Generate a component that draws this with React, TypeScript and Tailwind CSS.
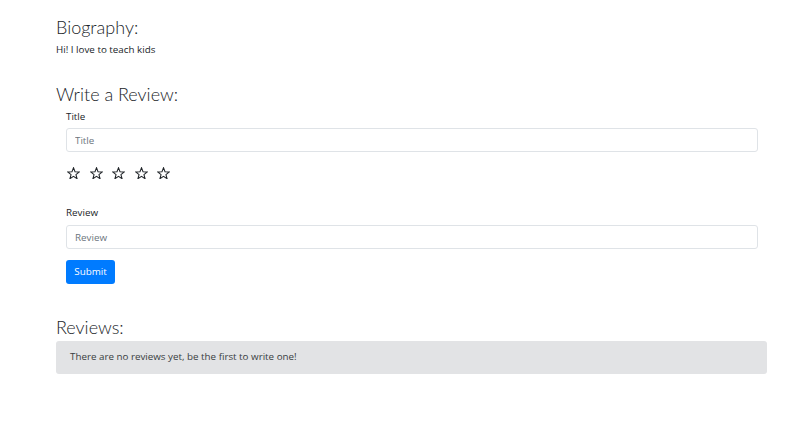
const BODY = { fontFamily: '"Open Sans", "Noto Sans", sans-serif' };
const HEAD = { fontFamily: 'Lato, "Open Sans", sans-serif' };

function Star() {
  return (
    <svg width="13" height="12" viewBox="0 0 24 23" fill="none" stroke="#212529" strokeWidth="2" strokeLinejoin="miter">
      <path d="M12 1.5l2.9 7.6 8.1.4-6.3 5.1 2.2 7.9L12 18l-6.9 4.5 2.2-7.9L1 9.5l8.1-.4z" />
    </svg>
  );
}

export default function App() {
  return (
    <div className="min-h-[435px] bg-white text-[#212529]" style={BODY}>
      <div className="w-[711px] ml-[56px] pt-[15px]">
        <h3 className="text-[18px] leading-[24px] font-light" style={HEAD}>Biography:</h3>
        <p className="mt-[3px] text-[9.8px] leading-[15px]">Hi! I love to teach kids</p>

        <h3 className="mt-[25px] text-[18px] leading-[24px] font-light" style={HEAD}>Write a Review:</h3>
        <form className="px-[10px]" onSubmit={(e) => e.preventDefault()}>
          <label className="block mt-[3px] text-[9.8px] leading-[15px]">Title</label>
          <input
            placeholder="Title"
            className="mt-[4px] block w-[692px] h-[24px] px-[8px] text-[9.8px] border border-[#dfe3e7] rounded-[3px] placeholder:text-[#6c757d] outline-none"
          />
          <div className="mt-[15px] flex gap-[9.5px] pl-[1px]">
            <Star />
            <Star />
            <Star />
            <Star />
            <Star />
          </div>
          <label className="block mt-[26px] text-[9.8px] leading-[15px]">Review</label>
          <input
            placeholder="Review"
            className="mt-[5px] block w-[692px] h-[24px] px-[8px] text-[9.8px] border border-[#dfe3e7] rounded-[3px] placeholder:text-[#6c757d] outline-none"
          />
          <button className="mt-[11px] h-[24px] w-[49px] rounded-[3px] bg-[#007bff] text-white text-[9.8px] leading-[24px]">
            Submit
          </button>
        </form>

        <h3 className="mt-[31px] text-[18px] leading-[24px] font-light" style={HEAD}>Reviews:</h3>
        <div className="mt-[2px] h-[33px] flex items-center px-[14px] rounded-[3px] bg-[#e2e3e5] text-[#383d41] text-[9.8px]">
          There are no reviews yet, be the first to write one!
        </div>
      </div>
    </div>
  );
}
